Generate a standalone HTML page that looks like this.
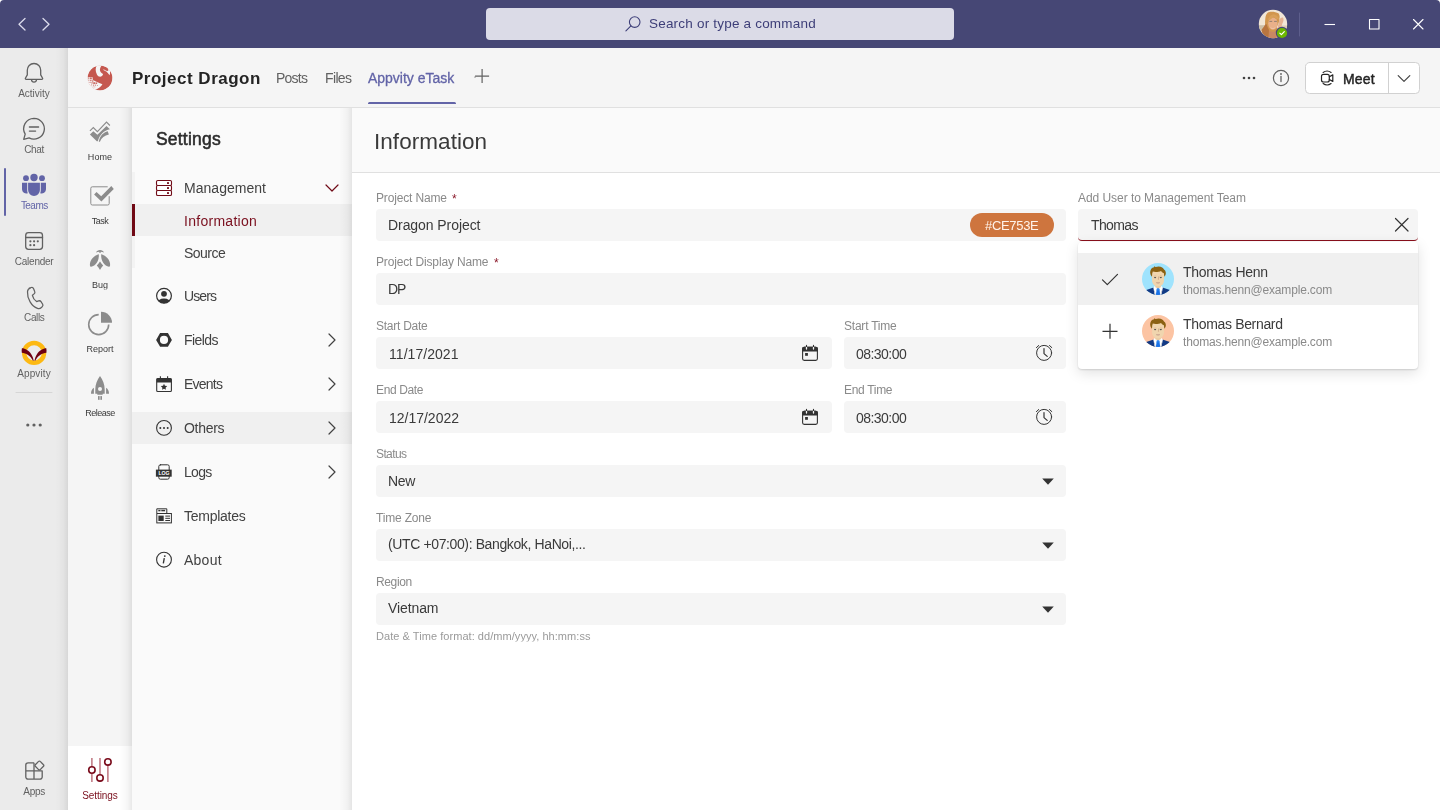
<!DOCTYPE html>
<html lang="en">
<head>
<meta charset="utf-8">
<title>Project Dragon - Appvity eTask</title>
<style>
*{box-sizing:border-box;margin:0;padding:0}
html,body{width:1440px;height:810px;overflow:hidden;background:#fff}
body{font-family:"Liberation Sans",sans-serif;color:#424242;position:relative;font-size:14px}
.abs{position:absolute}
.t{position:absolute;white-space:nowrap;line-height:1;transform:translateY(-50%);will-change:transform}
svg{position:absolute;overflow:visible}
/* title bar */
#titlebar{left:0;top:0;width:1440px;height:48px;background:#464775}
#search{left:486px;top:8px;width:468px;height:32px;background:#dbdbe7;border-radius:4px}
/* left rail */
#rail{left:0;top:48px;width:68px;height:762px;background:#ebebeb}
.rl{font-size:10px;color:#616161;text-align:center;width:68px;left:0}
/* header */
#header{left:68px;top:48px;width:1372px;height:60px;background:#f5f5f5;border-bottom:1px solid #e0e0e0}
/* app rail */
#apprail{left:68px;top:108px;width:64px;height:702px;background:#f5f5f5}
.al{font-size:10px;color:#333;text-align:center;width:64px;left:68px}
/* settings panel */
#panel{left:132px;top:108px;width:220px;height:702px;background:#fafafa}
.shl{position:absolute;width:13px;background:linear-gradient(90deg,rgba(0,0,0,0),rgba(0,0,0,.012) 30%,rgba(0,0,0,.035) 65%,rgba(0,0,0,.085))}
.mi{font-size:14px;color:#424242;left:184px}
/* main */
#main{left:352px;top:108px;width:1088px;height:702px;background:#fff}
#mainhead{left:352px;top:108px;width:1088px;height:65px;background:#fafafa;border-bottom:1px solid #e0e0e0}
.lb{font-size:11px;color:#8a8a8a}
.inp{position:absolute;background:#f5f5f5;border-radius:4px;height:32px}
.val{font-size:14px;color:#333}
</style>
</head>
<body>
<!-- TITLE BAR -->
<div id="titlebar" class="abs"></div>
<div id="search" class="abs"></div>
<div class="t" style="left:648.800px;top:24.200px;font-size:13.500px;letter-spacing:.2px;color:#3d3e78">Search or type a command</div>


<!-- title bar content -->
<svg style="left:0;top:0" width="1440" height="48" viewBox="0 0 1440 48" fill="none" stroke-linecap="round" stroke-linejoin="round">
  <path d="M0 0H4A4 4 0 0 0 0 4ZM1440 0H1436A4 4 0 0 1 1440 4Z" fill="#fff" stroke="none"/>
  <path d="M25 18.5 19 24.2 25 30" stroke="#dcdcec" stroke-width="1.3"/>
  <path d="M43 18.5 49 24.2 43 30" stroke="#dcdcec" stroke-width="1.3"/>
  <!-- search icon -->
  <circle cx="634.700" cy="22.100" r="5.300" stroke="#3d3e78" stroke-width="1.100"/>
  <path d="M630.900 25.900 625.900 30.800" stroke="#3d3e78" stroke-width="1.100"/>
  <!-- avatar -->
  <defs>
    <clipPath id="tav"><circle cx="1273" cy="24" r="14.200"/></clipPath>
    <filter id="tbl" x="-20%" y="-20%" width="140%" height="140%"><feGaussianBlur stdDeviation=".7"/></filter>
  </defs>
  <g clip-path="url(#tav)" stroke="none">
    <rect x="1258" y="9" width="30" height="30" fill="#f1e6d6"/>
    <g filter="url(#tbl)">
      <rect x="1257" y="25.200" width="10" height="4.600" fill="#cdbfa7"/>
      <rect x="1279" y="25.500" width="10" height="4.500" fill="#dccbb4"/>
      <path d="M1279.500 19.500c1-1.800 2.600-2.600 3.600-1.800 1 1.600 .2 4.200-.8 6l-2 6.500-3-1.500z" fill="#e6b392"/>
      <path d="M1267.800 12.600C1270 11.400 1275 11.400 1278.700 13.600C1279.800 15.500 1279.800 17.500 1279.400 18.800C1279.200 21 1278.800 22.500 1278.200 23.800L1276.700 27.200L1277.500 30L1277 39L1268.500 38.500C1266 37.500 1264.800 36 1264 34.600C1262.300 33 1261.300 31 1261.600 29.700C1263 28 1264.500 26.500 1265.100 24.700C1265 22.500 1265 20.500 1265.300 18.800C1265.500 16 1266.300 14 1267.800 12.600Z" fill="#d1964f"/>
      <path d="M1265.100 24.700C1264.500 26.500 1263 28 1261.600 29.700C1261.300 31 1262.300 33 1264 34.600C1264.800 36 1266 37.500 1268.500 38.500L1269 30C1268 28 1267 26 1266.500 24Z" fill="#b87540"/>
      <ellipse cx="1272.900" cy="23.600" rx="4.700" ry="6.200" fill="#e9b08a"/>
      <path d="M1268 20.500c.5-3.500 2.500-5.800 5.500-6.300 3 .5 5 2.500 5.500 5.300-2.500-.5-4.500-1.500-5.500-3-1.500 2.300-3.500 3.500-5.500 4z" fill="#d9a05a"/>
      <path d="M1270.300 27.300c1.500 1.200 3.800 1.200 5.200 0-.8 1.700-4.400 1.700-5.200 0z" fill="#f6ebe4"/>
      <path d="M1269.800 21.400h2M1274.500 21.400h2" stroke="#7f7468" stroke-width=".8"/>
      <path d="M1269.300 30.500c1.800 1.800 5.600 1.800 7.400 0l.6 8.500h-8.600z" fill="#c98763"/>
    </g>
  </g>
  <circle cx="1282" cy="33" r="6.200" fill="#464775" stroke="none"/>
  <circle cx="1282" cy="33" r="5.100" fill="#6bb700" stroke="none"/>
  <path d="M1279.800 33.100 1281.400 34.700 1284.300 31.700" stroke="#fff" stroke-width="1.200"/>
  <path d="M1299.5 13V36" stroke="#5d5e8c" stroke-width="1"/>
  <!-- window controls -->
  <path d="M1324.5 24.5H1335" stroke="#fff" stroke-width="1.1" stroke-linecap="butt"/>
  <rect x="1369.5" y="19.5" width="9.5" height="9.5" stroke="#fff" stroke-width="1.1"/>
  <path d="M1413.5 19.5 1423 29M1423 19.5 1413.5 29" stroke="#fff" stroke-width="1.1"/>
</svg>

<!-- LEFT RAIL -->
<div id="rail" class="abs"></div>


<!-- left rail content -->
<div class="shl" style="left:55px;top:48px;height:762px"></div>
<div class="abs" style="left:4px;top:168px;width:2px;height:48px;background:#6264a7;border-radius:1px"></div>
<svg style="left:0;top:48px" width="68" height="762" viewBox="0 48 68 762" fill="none" stroke="#616161" stroke-width="1.3" stroke-linecap="round" stroke-linejoin="round">
  <!-- bell -->
  <path d="M34 63.5c-4 0-6.7 3-6.7 6.8v4.6l-1.9 3.4c-.2.5.1 1 .7 1h15.800c.6 0 .9-.5.7-1l-1.900-3.400v-4.600c0-3.800-2.700-6.800-6.700-6.800z"/>
  <path d="M31.500 79.600a2.500 2.500 0 0 0 5 0"/>
  <!-- chat -->
  <path d="M34 118.300a10.400 10.400 0 1 1-4.900 19.600l-5.400 1.500 1.500-5.300a10.400 10.400 0 0 1 8.800-15.800z"/>
  <path d="M29.400 127h9.200M29.400 131.100h6.200"/>
  <!-- teams -->
  <g fill="#6264a7" stroke="none">
    <circle cx="34" cy="177.500" r="3.700"/>
    <circle cx="26" cy="178.200" r="2.900"/>
    <circle cx="42" cy="178.200" r="2.900"/>
    <path d="M28.100 182.700h11.800v7.300a5.900 5.900 0 0 1-11.800 0z"/>
    <path d="M22 182.700h5.200v7.600c0 1.100.2 2.100.6 3a4.300 4.300 0 0 1-5.800-4z"/>
    <path d="M46 182.700h-5.200v7.600c0 1.100-.2 2.100-.6 3a4.300 4.300 0 0 0 5.800-4z"/>
  </g>
  <!-- calendar -->
  <rect x="25.700" y="232.700" width="16.800" height="16.600" rx="2.800"/>
  <path d="M25.700 237.500h16.800"/>
  <g fill="#616161" stroke="none">
    <circle cx="30.400" cy="241.300" r="1.100"/><circle cx="34.100" cy="241.300" r="1.100"/><circle cx="37.800" cy="241.300" r="1.100"/>
    <circle cx="30.400" cy="245.200" r="1.100"/><circle cx="34.100" cy="245.200" r="1.100"/>
  </g>
  <!-- calls -->
  <path d="M29.300 288.100l1.900-.6c1-.3 2 .2 2.400 1.200l1.100 2.700c.4.900.1 1.900-.6 2.500l-1.700 1.400c.5 2.300 2.200 5 4.200 6.300l2-.7c.9-.3 1.900 0 2.400.8l1.500 2.300c.6.800.5 1.900-.2 2.600l-.900.900c-1 1-2.500 1.400-3.900.900-6-2-10.400-9.800-10-16.600.1-1.700 1.100-3.200 2.800-3.700z" stroke-width="1.250"/>
  <!-- appvity -->
  <circle cx="34.100" cy="352.900" r="9.900" stroke="#fdb913" stroke-width="4.500"/>
  <g fill="#6e0011" stroke="none">
    <path d="M21.900 348.200C25.200 348.200 29 350.500 31.400 354.400C32.600 356.400 33.400 358.600 33.700 360.700C33.100 360.900 32.600 360.500 32.200 359.500C31.200 357.500 30 356.300 28 355C26 353.700 24 353 21.800 352.800C21.600 351.300 21.600 349.700 21.900 348.200Z"/>
    <path d="M46.300 348.200C43 348.200 39.200 350.500 36.800 354.400C35.600 356.400 34.800 358.600 34.500 360.700C35.100 360.900 35.600 360.500 36 359.500C37 357.500 38.200 356.300 40.200 355C42.200 353.700 44.200 353 46.400 352.800C46.600 351.300 46.600 349.700 46.300 348.200Z"/>
  </g>
  <path d="M16 392.500h36" stroke="#d6d6d6" stroke-width="1"/>
  <g fill="#616161" stroke="none"><circle cx="27.800" cy="425" r="1.600"/><circle cx="34" cy="425" r="1.600"/><circle cx="40.200" cy="425" r="1.600"/></g>
  <!-- apps -->
  <path d="M34 762.800H28a2.200 2.200 0 0 0-2.200 2.200V777a2.200 2.200 0 0 0 2.200 2.200H40a2.200 2.200 0 0 0 2.200-2.200V770.900H25.800M34 762.800V779.200" stroke-width="1.300" stroke-linecap="butt"/>
  <path d="M38.600 761.400a1.100 1.100 0 0 1 1.600 0l3.300 3.300a1.100 1.100 0 0 1 0 1.600l-3.300 3.300a1.100 1.100 0 0 1-1.600 0l-3.300-3.300a1.100 1.100 0 0 1 0-1.600z" stroke-width="1.300" fill="#ebebeb"/>
</svg>
<div class="t rl" style="top:93.500px">Activity</div>
<div class="t rl" style="top:149.500px;letter-spacing:-0.3px;padding-left:0.3px">Chat</div>
<div class="t rl" style="top:205.500px;color:#6264a7;letter-spacing:-0.55px;padding-left:0.55px">Teams</div>
<div class="t rl" style="top:261.500px;letter-spacing:-0.25px;padding-left:0.25px">Calender</div>
<div class="t rl" style="top:317.500px;letter-spacing:-0.4px;padding-left:0.4px">Calls</div>
<div class="t rl" style="top:373.500px;letter-spacing:0.1px;padding-left:0px">Appvity</div>
<div class="t rl" style="top:791.500px;letter-spacing:-0.25px;padding-left:0.25px">Apps</div>

<!-- HEADER -->
<div id="header" class="abs"></div>


<!-- header content -->
<svg style="left:87px;top:65px" width="26" height="26" viewBox="-0.5 -0.5 25.400 25.400">
  <defs><clipPath id="lc"><circle cx="12.200" cy="12.200" r="12.200"/></clipPath></defs>
  <g clip-path="url(#lc)">
    <circle cx="12.200" cy="12.200" r="12.200" fill="#c5584f"/>
    <path d="M8.700 -1L8.700 .4C7.700 3 7.600 6 9.200 8.800C10 10.200 11 11 12.300 11C13.600 11 14.800 10 15.200 8.300C14 7.800 13.200 7 13 6.600C12.200 5.500 12 4.400 12.200 3.400C12.400 2.200 12.800 1.400 13.300 .7L13.500 -1Z" fill="#f5f5f5"/>
    <path d="M20.400 4.900L18.500 5.900L21.700 9.400L22.200 5.500L26 5L26 -1L21 -1L19.900 2.500Z" fill="#f5f5f5"/>
    <path d="M15.600 4.100L19.400 6" stroke="#f5f5f5" stroke-width=".8" fill="none"/>
    <path d="M-1 11.200H4.800L5.200 14.200L9.800 16.300L14.600 18.300C13.300 21 10.500 22.500 7.800 23.700L-1 26Z" fill="#f5f5f5"/>
    <g fill="#c5584f" opacity=".85">
      <rect x=".6" y="11.600" width="1.300" height="1.300"/><rect x="2.400" y="11.600" width="1.800" height="1.800"/>
      <rect x=".8" y="13.800" width="1" height="1"/><rect x="2.600" y="14" width="1.300" height="1.300"/><rect x="4.400" y="14.500" width="1.300" height="1.300"/>
      <rect x="2" y="16" width="1" height="1"/><rect x="3.800" y="16.300" width="1.300" height="1.300"/><rect x="5.600" y="16.300" width="1.800" height="1.800"/><rect x="7.800" y="16.500" width="1.600" height="1.600"/>
      <rect x="3.600" y="18.500" width=".9" height=".9"/><rect x="5.400" y="18.700" width="1" height="1"/><rect x="7.200" y="18.700" width="1" height="1"/><rect x="9.200" y="19" width=".8" height=".8"/>
      <rect x="5.200" y="20.500" width=".7" height=".7"/><rect x="6.800" y="20.600" width=".7" height=".7"/>
    </g>
  </g>
</svg>
<div class="t" style="left:131.800px;top:78.200px;font-size:17px;letter-spacing:.5px;color:#242424;font-weight:700;">Project Dragon</div>
<div class="t" style="left:276px;top:78px;font-size:14px;letter-spacing:-0.75px;color:#616161;">Posts</div>
<div class="t" style="left:325px;top:78px;font-size:14px;letter-spacing:-0.64px;color:#616161;">Files</div>
<div class="t" style="left:368px;top:78px;font-size:14px;letter-spacing:-.02px;color:#6264a7;-webkit-text-stroke:.3px #6264a7;">Appvity eTask</div>
<div class="abs" style="left:368px;top:101.600px;width:88px;height:2.600px;background:#6264a7;border-radius:1.500px 1.500px 0 0"></div>
<svg style="left:1230px;top:48px" width="210" height="60" viewBox="1230 48 210 60" fill="none" stroke="#424242" stroke-width="1.200" stroke-linecap="round" stroke-linejoin="round">
  <path d="M475 77h0" />
  <g fill="#424242" stroke="none"><circle cx="1244" cy="78" r="1.300"/><circle cx="1249" cy="78" r="1.300"/><circle cx="1254" cy="78" r="1.300"/></g>
  <circle cx="1281" cy="78" r="7.600" stroke="#616161"/>
  <path d="M1281 76.500v5" stroke="#616161" stroke-width="1.300"/><circle cx="1281" cy="74" r=".9" fill="#616161" stroke="none"/>
  <rect x="1305.500" y="62.500" width="114" height="31" rx="4" fill="#fff" stroke="#d1d1d1" stroke-width="1"/>
  <path d="M1388.500 62.500v31" stroke="#d1d1d1" stroke-width="1"/>
  <rect x="1321.500" y="74.300" width="7.800" height="7.700" rx="2" stroke="#242424" stroke-width="1.200"/>
  <path d="M1329.300 76.800l3.500-1.900v6.500l-3.500-1.900" stroke="#242424" stroke-width="1.200"/>
  <path d="M1323.100 72.500a6.800 6.800 0 0 1 8 0M1323.100 83.500a6.800 6.800 0 0 0 8 0" stroke="#242424" stroke-width="1.100"/>
  <path d="M1398.200 75.600l5.800 5.800 5.800-5.800" stroke="#424242" stroke-width="1.200"/>
</svg>
<svg style="left:474px;top:68px" width="16" height="16" viewBox="0 0 16 16" fill="none" stroke="#616161" stroke-width="1.200" stroke-linecap="butt"><path d="M8.100 1.100v14M1.100 8.100h14"/></svg>
<div class="t" style="left:1342.800px;top:78.500px;font-size:14px;letter-spacing:.15px;color:#242424;-webkit-text-stroke:.45px #242424;">Meet</div>

<!-- APP RAIL -->
<div id="apprail" class="abs"></div>


<!-- app rail content -->
<div class="abs" style="left:68px;top:746px;width:64px;height:64px;background:#fff"></div>
<svg style="left:68px;top:108px" width="64" height="702" viewBox="68 108 64 702" fill="none" stroke-linecap="round" stroke-linejoin="round">
  <!-- home: stacked checks -->
  <path d="M89.900 130.800L93.300 127.500L97.400 131.600L106.500 122.100L109.900 125.500" stroke="#8c8c8c" stroke-width="1.100" stroke-linecap="butt" stroke-linejoin="miter"/>
  <g fill="#8c8c8c" stroke="none">
    <path d="M89.900 134.400L93.300 131.200L97.400 134.800L106.500 125.900L109.900 129.200C104 130.500 99.500 134.500 97.800 141.300L96.800 141.300Z"/>
    <path d="M98.800 141.700C100 135.600 103.500 132.400 107.700 131.300L108.900 134.600C104.500 135.500 101.500 138 99.900 141.800Z"/>
  </g>
  <!-- task -->
  <path d="M107.700 186.800H92.300a1.500 1.500 0 0 0-1.500 1.500v15.200a1.500 1.500 0 0 0 1.500 1.500h15.400a1.500 1.500 0 0 0 1.500-1.500v-7.300" stroke="#8c8c8c" stroke-width="1" stroke-linecap="butt"/>
  <path d="M94.100 194.400L96.500 191.900L101.200 196.200L111.300 186.100L113.800 188.900L101.400 201.500Z" fill="#8c8c8c"/>
  <!-- bug -->
  <g fill="#8c8c8c" stroke="none">
    <path d="M98.600 254.200C94 255.500 89.600 260 89.900 265C90 266.200 90.300 266.800 91 266.800C95.500 265.800 99.300 261.500 98.800 254.300Z"/>
    <path d="M101.400 254.200C106 255.500 110.400 260 110.100 265C110 266.200 109.700 266.800 109 266.800C104.500 265.800 100.700 261.500 101.200 254.300Z"/>
    <path d="M95.900 252.600C96.600 250.800 98.200 249.900 100 249.900C101.800 249.900 103.400 250.800 104.100 252.600C102.800 252 101.600 251.800 100.700 251.800L100.500 253L99.500 253L99.300 251.800C98.400 251.800 97.200 252 95.900 252.600Z"/>
    <path d="M100 261.600C101 263.300 102.200 264.600 103.200 265.600C102 267 101 268.400 100 269.900C99 268.400 98 267 96.800 265.600C97.800 264.600 99 263.300 100 261.600Z"/>
  </g>
  <!-- report -->
  <path d="M98.700 314.600a10 10 0 1 0 10 10" stroke="#8c8c8c" stroke-width="1.600" stroke-linecap="butt"/>
  <path d="M101 311.800a11 11 0 0 1 11 11h-11z" fill="#8c8c8c"/>
  <!-- release rocket -->
  <g fill="#8c8c8c" stroke="none">
    <path d="M100 376C102.800 379.500 104.700 384.500 104.700 389.500V393.700H102.800L102.600 394.700H97.400L97.200 393.700H95.300V389.500C95.300 384.500 97.200 379.500 100 376Z"/>
    <path d="M93.900 387.800V393.700H91C91 391 92 389 93.900 387.800ZM106.100 387.800V393.700H109C109 391 108 389 106.100 387.800Z"/>
    <rect x="98" y="396.100" width="1.500" height="3.700"/><rect x="100.500" y="396.100" width="1.500" height="3.700"/>
    <rect x="99.500" y="396.100" width="1" height="3.700" opacity=".5"/>
  </g>
  <circle cx="100" cy="389" r="2" fill="#f5f5f5"/>
  <!-- settings -->
  <path d="M91.900 758v24M100 758v24M107.900 758v24" stroke="#b4606c" stroke-width="1.300" stroke-linecap="butt"/>
  <g fill="#fff" stroke="#7a0c1c" stroke-width="1.600"><circle cx="91.900" cy="770" r="3.200"/><circle cx="100" cy="777.900" r="3.200"/><circle cx="107.900" cy="761.900" r="3.200"/></g>
</svg>
<div class="t al" style="left:68px;top:156.8px;font-size:9px;letter-spacing:0.1px;color:#3a3a3a;">Home</div>
<div class="t al" style="left:68px;top:220.5px;font-size:9px;letter-spacing:-0.5px;color:#3a3a3a;">Task</div>
<div class="t al" style="left:68px;top:284.5px;font-size:9px;letter-spacing:0px;color:#3a3a3a;">Bug</div>
<div class="t al" style="left:68px;top:348.8px;font-size:9px;letter-spacing:0px;color:#3a3a3a;">Report</div>
<div class="t al" style="left:68px;top:412.5px;font-size:9px;letter-spacing:-0.5px;color:#3a3a3a;">Release</div>
<div class="t al" style="left:68px;top:795.8px;font-size:10px;letter-spacing:-0.09px;color:#7a0f1e;">Settings</div>

<!-- MAIN -->
<div id="main" class="abs"></div>
<div id="mainhead" class="abs"></div>


<!-- main content -->
<div class="t" style="left:374.300px;top:142.200px;font-size:22.500px;letter-spacing:.05px;color:#3a3a3a;">Information</div>
<div class="t" style="left:376.2px;top:198px;font-size:12px;letter-spacing:-0.15px;color:#8a8a8a;">Project Name</div>
<div class="t" style="left:451.800px;top:198.900px;font-size:12px;color:#8b1a2b;">*</div>
<div class="t" style="left:376.2px;top:262px;font-size:12px;letter-spacing:-0.15px;color:#8a8a8a;">Project Display Name</div>
<div class="t" style="left:494px;top:262.900px;font-size:12px;color:#8b1a2b;">*</div>
<div class="t" style="left:376.2px;top:326px;font-size:12px;letter-spacing:-0.25px;color:#8a8a8a;">Start Date</div>
<div class="t" style="left:844.2px;top:326px;font-size:12px;letter-spacing:-0.22px;color:#8a8a8a;">Start Time</div>
<div class="t" style="left:376.2px;top:390px;font-size:12px;letter-spacing:-0.36px;color:#8a8a8a;">End Date</div>
<div class="t" style="left:844.2px;top:390px;font-size:12px;letter-spacing:-0.31px;color:#8a8a8a;">End Time</div>
<div class="t" style="left:376.2px;top:454px;font-size:12px;letter-spacing:-0.61px;color:#8a8a8a;">Status</div>
<div class="t" style="left:376.2px;top:518px;font-size:12px;letter-spacing:-0.18px;color:#8a8a8a;">Time Zone</div>
<div class="t" style="left:376.2px;top:582px;font-size:12px;letter-spacing:-0.36px;color:#8a8a8a;">Region</div>
<div class="t" style="left:1078.2px;top:198px;font-size:12px;letter-spacing:-0.05px;color:#8a8a8a;">Add User to Management Team</div>
<div class="inp" style="left:376px;top:209px;width:690px"></div>
<div class="inp" style="left:376px;top:273px;width:690px"></div>
<div class="inp" style="left:376px;top:337px;width:456px"></div>
<div class="inp" style="left:844px;top:337px;width:222px"></div>
<div class="inp" style="left:376px;top:401px;width:456px"></div>
<div class="inp" style="left:844px;top:401px;width:222px"></div>
<div class="inp" style="left:376px;top:465px;width:690px"></div>
<div class="inp" style="left:376px;top:529px;width:690px"></div>
<div class="inp" style="left:376px;top:593px;width:690px"></div>
<div class="inp" style="left:1078px;top:209px;width:340px;border-bottom:1.500px solid #8a101c;border-radius:4px"></div>
<div class="abs" style="left:970px;top:213px;width:84px;height:24px;border-radius:12px;background:#ce753e"></div>
<div class="t" style="left:985px;top:225.3px;font-size:13px;letter-spacing:-0.32px;color:#fff3ea;">#CE753E</div>
<div class="t" style="left:388.2px;top:225.3px;font-size:14px;letter-spacing:-0.07px;color:#3a3a3a;">Dragon Project</div>
<div class="t" style="left:388.2px;top:288.8px;font-size:14px;letter-spacing:-1.100px;color:#3a3a3a;">DP</div>
<div class="t" style="left:388.5px;top:354.3px;font-size:14px;letter-spacing:0.05px;color:#3a3a3a;">11/17/2021</div>
<div class="t" style="left:856.2px;top:354.3px;font-size:14px;letter-spacing:-0.54px;color:#3a3a3a;">08:30:00</div>
<div class="t" style="left:388.5px;top:418.3px;font-size:14px;letter-spacing:-0.01px;color:#3a3a3a;">12/17/2022</div>
<div class="t" style="left:856.2px;top:418.3px;font-size:14px;letter-spacing:-0.54px;color:#3a3a3a;">08:30:00</div>
<div class="t" style="left:388.2px;top:480.500px;font-size:14px;letter-spacing:-0.38px;color:#3a3a3a;">New</div>
<div class="t" style="left:388.2px;top:544.300px;font-size:14px;letter-spacing:-0.38px;color:#3a3a3a;">(UTC +07:00): Bangkok, HaNoi,...</div>
<div class="t" style="left:388.2px;top:608px;font-size:14px;letter-spacing:-0.1px;color:#3a3a3a;">Vietnam</div>
<div class="t" style="left:376.2px;top:635.800px;font-size:11px;letter-spacing:0.05px;color:#9a9a9a;">Date &amp; Time format: dd/mm/yyyy, hh:mm:ss</div>
<div class="t" style="left:1090.5px;top:225.3px;font-size:14px;letter-spacing:-0.62px;color:#3a3a3a;">Thomas</div>
<svg style="left:352px;top:108px" width="1088" height="702" viewBox="352 108 1088 702" fill="none">
<g transform="translate(0,0)"><rect x="802.600" y="347.400" width="14.800" height="13" rx="1.600" stroke="#333" stroke-width="1.100"/><path d="M802.600 351v-2a1.600 1.600 0 0 1 1.600-1.600h11.600a1.600 1.600 0 0 1 1.600 1.600v2z" fill="#333" stroke="#333" stroke-width="1.100"/><path d="M806.500 347.400v1.700M813.500 347.400v1.700" stroke="#f5f5f5" stroke-width="1.300" stroke-linecap="round"/><path d="M806.500 345.200v1.200M813.500 345.200v1.200" stroke="#333" stroke-width="1.100" stroke-linecap="round"/><rect x="805.100" y="353" width="2.800" height="2.800" fill="#333"/></g>
<g transform="translate(0,64)"><rect x="802.600" y="347.400" width="14.800" height="13" rx="1.600" stroke="#333" stroke-width="1.100"/><path d="M802.600 351v-2a1.600 1.600 0 0 1 1.600-1.600h11.600a1.600 1.600 0 0 1 1.600 1.600v2z" fill="#333" stroke="#333" stroke-width="1.100"/><path d="M806.500 347.400v1.700M813.500 347.400v1.700" stroke="#f5f5f5" stroke-width="1.300" stroke-linecap="round"/><path d="M806.500 345.200v1.200M813.500 345.200v1.200" stroke="#333" stroke-width="1.100" stroke-linecap="round"/><rect x="805.100" y="353" width="2.800" height="2.800" fill="#333"/></g>
<g transform="translate(0,0)" stroke="#333" stroke-width="1.100" stroke-linecap="round" stroke-linejoin="round"><circle cx="1044.100" cy="352.900" r="7.500" stroke-width="1"/><path d="M1044 348.600v5l3.200 2.800" stroke-width="1.200"/><path d="M1036.400 347.600l2.300-2.100M1051.800 347.600l-2.300-2.100" stroke-width="1"/></g>
<g transform="translate(0,64)" stroke="#333" stroke-width="1.100" stroke-linecap="round" stroke-linejoin="round"><circle cx="1044.100" cy="352.900" r="7.500" stroke-width="1"/><path d="M1044 348.600v5l3.200 2.800" stroke-width="1.200"/><path d="M1036.400 347.600l2.300-2.100M1051.800 347.600l-2.300-2.100" stroke-width="1"/></g>
<path d="M1042.200 478.4h11.600l-5.800 6.400z" fill="#333" transform="translate(0,0)"/>
<path d="M1042.200 542.4h11.600l-5.800 6.400z" fill="#333" transform="translate(0,0)"/>
<path d="M1042.200 606.4h11.600l-5.800 6.400z" fill="#333" transform="translate(0,0)"/>
<path d="M1395.500 218.500l12.500 12.500M1408 218.500l-12.500 12.500" stroke="#333" stroke-width="1.200" stroke-linecap="round"/>
</svg>


<!-- dropdown -->
<div class="abs" style="left:1078px;top:242px;width:340px;height:127px;background:#fff;border-radius:4px;box-shadow:0 4px 14px rgba(0,0,0,.12),0 1px 2px rgba(0,0,0,.14)"></div>
<div class="abs" style="left:1078px;top:253px;width:340px;height:52px;background:#f0f0f0"></div>
<svg style="left:1100px;top:270px" width="20" height="72" viewBox="1100 270 20 72" fill="none" stroke="#333" stroke-width="1.200" stroke-linecap="round" stroke-linejoin="round">
  <path d="M1102.500 279.800l4.800 4.800 10.200-10.200"/>
  <path d="M1110 323.800v15M1102.500 331.300h15" stroke-linecap="butt"/>
</svg>
<svg style="left:1142px;top:263px" width="32" height="32" viewBox="0 0 32 32">
  <defs><clipPath id="av1"><circle cx="16" cy="16" r="16"/></clipPath></defs>
  <g clip-path="url(#av1)">
    <rect width="32" height="32" fill="#9fe3fd"/>
    <path d="M3.500 27.200L12.300 24.200H19.800L28.600 27.200L30 33H2Z" fill="#123a85"/>
    <path d="M11.300 24.500L12.500 23.200H19.600L20.900 24.500L19.200 32.500H12.900Z" fill="#fff"/>
    <path d="M12.300 27.500L13.300 32.500M19.800 27.500L18.800 32.500" stroke="#b9bfcc" stroke-width=".9" fill="none"/>
    <path d="M13.300 19.500H18.800V24.200C17.500 25.300 14.600 25.300 13.300 24.200Z" fill="#e6c69c"/>
    <path d="M14.900 25.600H17.200L17.600 27.400L18.300 32.500H13.800L14.500 27.400Z" fill="#1a73e8"/>
    <path d="M14.900 25.600H17.200L17.500 27.500H14.600Z" fill="#2b86f0"/>
    <path d="M10.100 9.500C10.100 7.500 13 6.800 16 6.800C19 6.800 22 7.500 22 9.500V17.500C22 20.500 19.500 23.600 16 23.600C12.500 23.600 10.100 20.500 10.100 17.500Z" fill="#f0d5ae"/>
    <path d="M8.300 10.500C7.800 6.500 10 4.500 12 4.200L12.200 3.200L13.600 4L16.500 3.400C19.500 3.400 21.500 4.800 22 6.500C23.800 7.500 24.300 10 23.500 12L22.300 13.800L21.900 10.200C20.500 9.800 19.500 8.800 19 8C17 9 13 9.200 10.800 8.600L10.200 10.500L10 13.800L9 12.500C8.600 12 8.400 11.300 8.300 10.500Z" fill="#8b6112"/>
    <ellipse cx="13.100" cy="14.600" rx="1.100" ry=".6" fill="#4a4a4a"/><ellipse cx="18.800" cy="14.600" rx="1.100" ry=".6" fill="#4a4a4a"/>
    <path d="M11.800 13.300C12.500 12.900 13.600 12.900 14.400 13.200M17.500 13.200C18.300 12.900 19.400 12.900 20.100 13.300" stroke="#d2ae86" stroke-width=".6" fill="none"/>
    <path d="M16.600 13.400L16.400 16.800" stroke="#c9a080" stroke-width=".7" fill="none"/>
    <path d="M13.900 19.600C15 19.300 17.100 19.300 18.200 19.600C17.500 20.800 14.600 20.800 13.900 19.600Z" fill="#b58b80"/>
  </g>
</svg>
<svg style="left:1142px;top:315px" width="32" height="32" viewBox="0 0 32 32">
  <defs><clipPath id="av2"><circle cx="16" cy="16" r="16"/></clipPath></defs>
  <g clip-path="url(#av2)">
    <rect width="32" height="32" fill="#fcc4a3"/>
    <path d="M3.500 27.200L12.300 24.200H19.800L28.600 27.200L30 33H2Z" fill="#123a85"/>
    <path d="M11.300 24.500L12.500 23.200H19.600L20.900 24.500L19.200 32.500H12.900Z" fill="#fff"/>
    <path d="M12.300 27.500L13.300 32.500M19.800 27.500L18.800 32.500" stroke="#b9bfcc" stroke-width=".9" fill="none"/>
    <path d="M13.300 19.500H18.800V24.200C17.500 25.300 14.600 25.300 13.300 24.200Z" fill="#e6c69c"/>
    <path d="M14.900 25.600H17.200L17.600 27.400L18.300 32.500H13.800L14.500 27.400Z" fill="#1a73e8"/>
    <path d="M14.900 25.600H17.200L17.500 27.500H14.600Z" fill="#2b86f0"/>
    <path d="M10.100 9.500C10.100 7.500 13 6.800 16 6.800C19 6.800 22 7.500 22 9.500V17.500C22 20.500 19.500 23.600 16 23.600C12.500 23.600 10.100 20.500 10.100 17.500Z" fill="#f0d5ae"/>
    <path d="M8.300 10.500C7.800 6.500 10 4.500 12 4.200L12.200 3.200L13.600 4L16.500 3.400C19.500 3.400 21.500 4.800 22 6.500C23.800 7.500 24.300 10 23.500 12L22.300 13.800L21.900 10.200C20.500 9.800 19.500 8.800 19 8C17 9 13 9.200 10.800 8.600L10.200 10.500L10 13.800L9 12.500C8.600 12 8.400 11.300 8.300 10.500Z" fill="#8b6112"/>
    <ellipse cx="13.100" cy="14.600" rx="1.100" ry=".6" fill="#4a4a4a"/><ellipse cx="18.800" cy="14.600" rx="1.100" ry=".6" fill="#4a4a4a"/>
    <path d="M11.800 13.300C12.500 12.900 13.600 12.900 14.400 13.200M17.500 13.200C18.300 12.900 19.400 12.900 20.100 13.300" stroke="#d2ae86" stroke-width=".6" fill="none"/>
    <path d="M16.600 13.400L16.400 16.800" stroke="#c9a080" stroke-width=".7" fill="none"/>
    <path d="M13.900 19.600C15 19.300 17.100 19.300 18.200 19.600C17.500 20.800 14.600 20.800 13.900 19.600Z" fill="#b58b80"/>
  </g>
</svg>
<div class="t" style="left:1182.5px;top:271.700px;font-size:14px;letter-spacing:-0.29px;color:#3a3a3a;">Thomas Henn</div>
<div class="t" style="left:1182.5px;top:290px;font-size:12px;letter-spacing:-0.17px;color:#8a8a8a;">thomas.henn@example.com</div>
<div class="t" style="left:1182.5px;top:323.800px;font-size:14px;letter-spacing:-0.33px;color:#3a3a3a;">Thomas Bernard</div>
<div class="t" style="left:1182.5px;top:342px;font-size:12px;letter-spacing:-0.17px;color:#8a8a8a;">thomas.henn@example.com</div>

<!-- SETTINGS PANEL -->
<div id="panel" class="abs"></div>


<!-- panel content -->
<div class="abs" style="left:132px;top:204px;width:220px;height:32px;background:#f0f0f0"></div>
<div class="abs" style="left:132px;top:172px;width:3px;height:96px;background:#f3f3f3"></div>
<div class="abs" style="left:132px;top:204px;width:3px;height:32px;background:#700814"></div>
<div class="abs" style="left:132px;top:412px;width:220px;height:32px;background:#f0f0f0"></div>
<svg style="left:132px;top:108px" width="220" height="702" viewBox="132 108 220 702" fill="none" stroke-linecap="round" stroke-linejoin="round">
  <!-- management -->
  <g stroke="#700b17" stroke-width="1.100" fill="#fff">
    <rect x="156.500" y="180.500" width="15" height="5" rx="1.300"/>
    <rect x="156.500" y="185.500" width="15" height="5" rx="1.300"/>
    <rect x="156.500" y="190.500" width="15" height="5" rx="1.300"/>
  </g>
  <g fill="#700b17"><rect x="167" y="182.100" width="2" height="1.900" rx=".4"/><rect x="167" y="187.100" width="2" height="1.900" rx=".4"/><rect x="167" y="192.100" width="2" height="1.900" rx=".4"/></g>
  <path d="M326 185l6 6 6-6" stroke="#700b17" stroke-width="1.200"/>
  <!-- users -->
  <defs><clipPath id="uc"><circle cx="164" cy="295.800" r="7.400"/></clipPath></defs>
  <circle cx="164" cy="295.800" r="7.400" stroke="#333" stroke-width="1.200"/>
  <circle cx="164" cy="293.800" r="2.900" fill="#333"/>
  <ellipse cx="164" cy="303.300" rx="7" ry="4.800" fill="#333" clip-path="url(#uc)"/>
  <!-- fields -->
  <path fill-rule="evenodd" fill="#333" d="M156.100 339.900L160.100 333.100H167.900L171.900 339.900L167.900 346.700H160.100ZM164 335.800a4.100 4.100 0 1 0 0 8.200a4.100 4.100 0 1 0 0-8.200Z"/>
  <!-- events -->
  <rect x="156.700" y="378.500" width="14.700" height="13" rx="1" stroke="#333" stroke-width="1.100"/>
  <rect x="156.700" y="378.500" width="14.700" height="4" fill="#333"/>
  <path d="M160.400 376.200v3M167.600 376.200v3" stroke="#333" stroke-width="1.100" stroke-linecap="butt"/>
  <path d="M164 383.800l.95 2.050 2.250.25-1.650 1.550.45 2.200-2-1.100-2 1.100.45-2.200-1.650-1.550 2.250-.25z" fill="#333"/>
  <!-- others -->
  <circle cx="164" cy="427.900" r="7.400" stroke="#333" stroke-width="1.100"/>
  <g fill="#333"><circle cx="160.300" cy="427.900" r="1"/><circle cx="164" cy="427.900" r="1"/><circle cx="167.700" cy="427.900" r="1"/></g>
  <!-- logs -->
  <rect x="158.800" y="464.800" width="10.400" height="14.400" rx="1.600" stroke="#333" stroke-width="1"/>
  <rect x="155.900" y="469.600" width="15.800" height="7.100" fill="#333"/>
  <text x="163.900" y="475.200" font-family="Liberation Sans, sans-serif" font-size="5.200" font-weight="700" fill="#fff" text-anchor="middle" letter-spacing="-.1">LOG</text>
  <!-- templates -->
  <path d="M156.800 513v-4.200h10v4.200" stroke="#333" stroke-width="1" stroke-linecap="butt" stroke-linejoin="miter"/>
  <rect x="158.300" y="509.900" width="2.200" height="1.400" fill="#333"/><rect x="161.300" y="509.900" width="3.800" height="1.400" fill="#333"/>
  <rect x="156.800" y="513.500" width="14.600" height="9.400" stroke="#333" stroke-width="1" stroke-linejoin="miter"/>
  <rect x="158.400" y="515.600" width="5.300" height="5.400" fill="#333"/>
  <path d="M165.300 516.100h4.700M165.300 518.300h4.700M165.300 520.500h4.700" stroke="#333" stroke-width="1" stroke-linecap="butt"/>
  <!-- about -->
  <circle cx="164" cy="559.700" r="7.400" stroke="#333" stroke-width="1.100"/>
  <path d="M164.300 558.200l-1 5.200" stroke="#333" stroke-width="1.400" stroke-linecap="butt"/>
  <circle cx="164.800" cy="556.100" r=".9" fill="#333"/>
  <!-- chevrons -->
  <g stroke="#424242" stroke-width="1.200">
    <path d="M329 334l6 6-6 6"/><path d="M329 378l6 6-6 6"/><path d="M329 422l6 6-6 6"/><path d="M329 466l6 6-6 6"/>
  </g>
</svg>
<div class="t" style="left:156px;top:140.400px;font-size:17.500px;letter-spacing:.2px;color:#2b2b2b;-webkit-text-stroke:.55px #2b2b2b;">Settings</div>
<div class="t" style="left:184.3px;top:188.2px;font-size:14px;letter-spacing:0.03px;color:#424242;">Management</div>
<div class="t" style="left:184.3px;top:221px;font-size:14px;letter-spacing:.28px;color:#7a0f1e;">Information</div>
<div class="t" style="left:184.3px;top:253.2px;font-size:14px;letter-spacing:-0.53px;color:#424242;">Source</div>
<div class="t" style="left:184.3px;top:296px;font-size:14px;letter-spacing:-0.89px;color:#424242;">Users</div>
<div class="t" style="left:184.3px;top:340px;font-size:14px;letter-spacing:-0.55px;color:#424242;">Fields</div>
<div class="t" style="left:184.3px;top:384.4px;font-size:14px;letter-spacing:-0.76px;color:#424242;">Events</div>
<div class="t" style="left:184.3px;top:428px;font-size:14px;letter-spacing:-0.3px;color:#424242;">Others</div>
<div class="t" style="left:184.3px;top:472.4px;font-size:14px;letter-spacing:-0.69px;color:#424242;">Logs</div>
<div class="t" style="left:184.3px;top:516.4px;font-size:14px;letter-spacing:-0.26px;color:#424242;">Templates</div>
<div class="t" style="left:184.3px;top:560px;font-size:14px;letter-spacing:0.25px;color:#424242;">About</div>


<!-- layer shadows -->
<div class="shl" style="left:119px;top:108px;height:702px"></div>
<div class="shl" style="left:339px;top:108px;height:702px"></div>
</body>
</html>
